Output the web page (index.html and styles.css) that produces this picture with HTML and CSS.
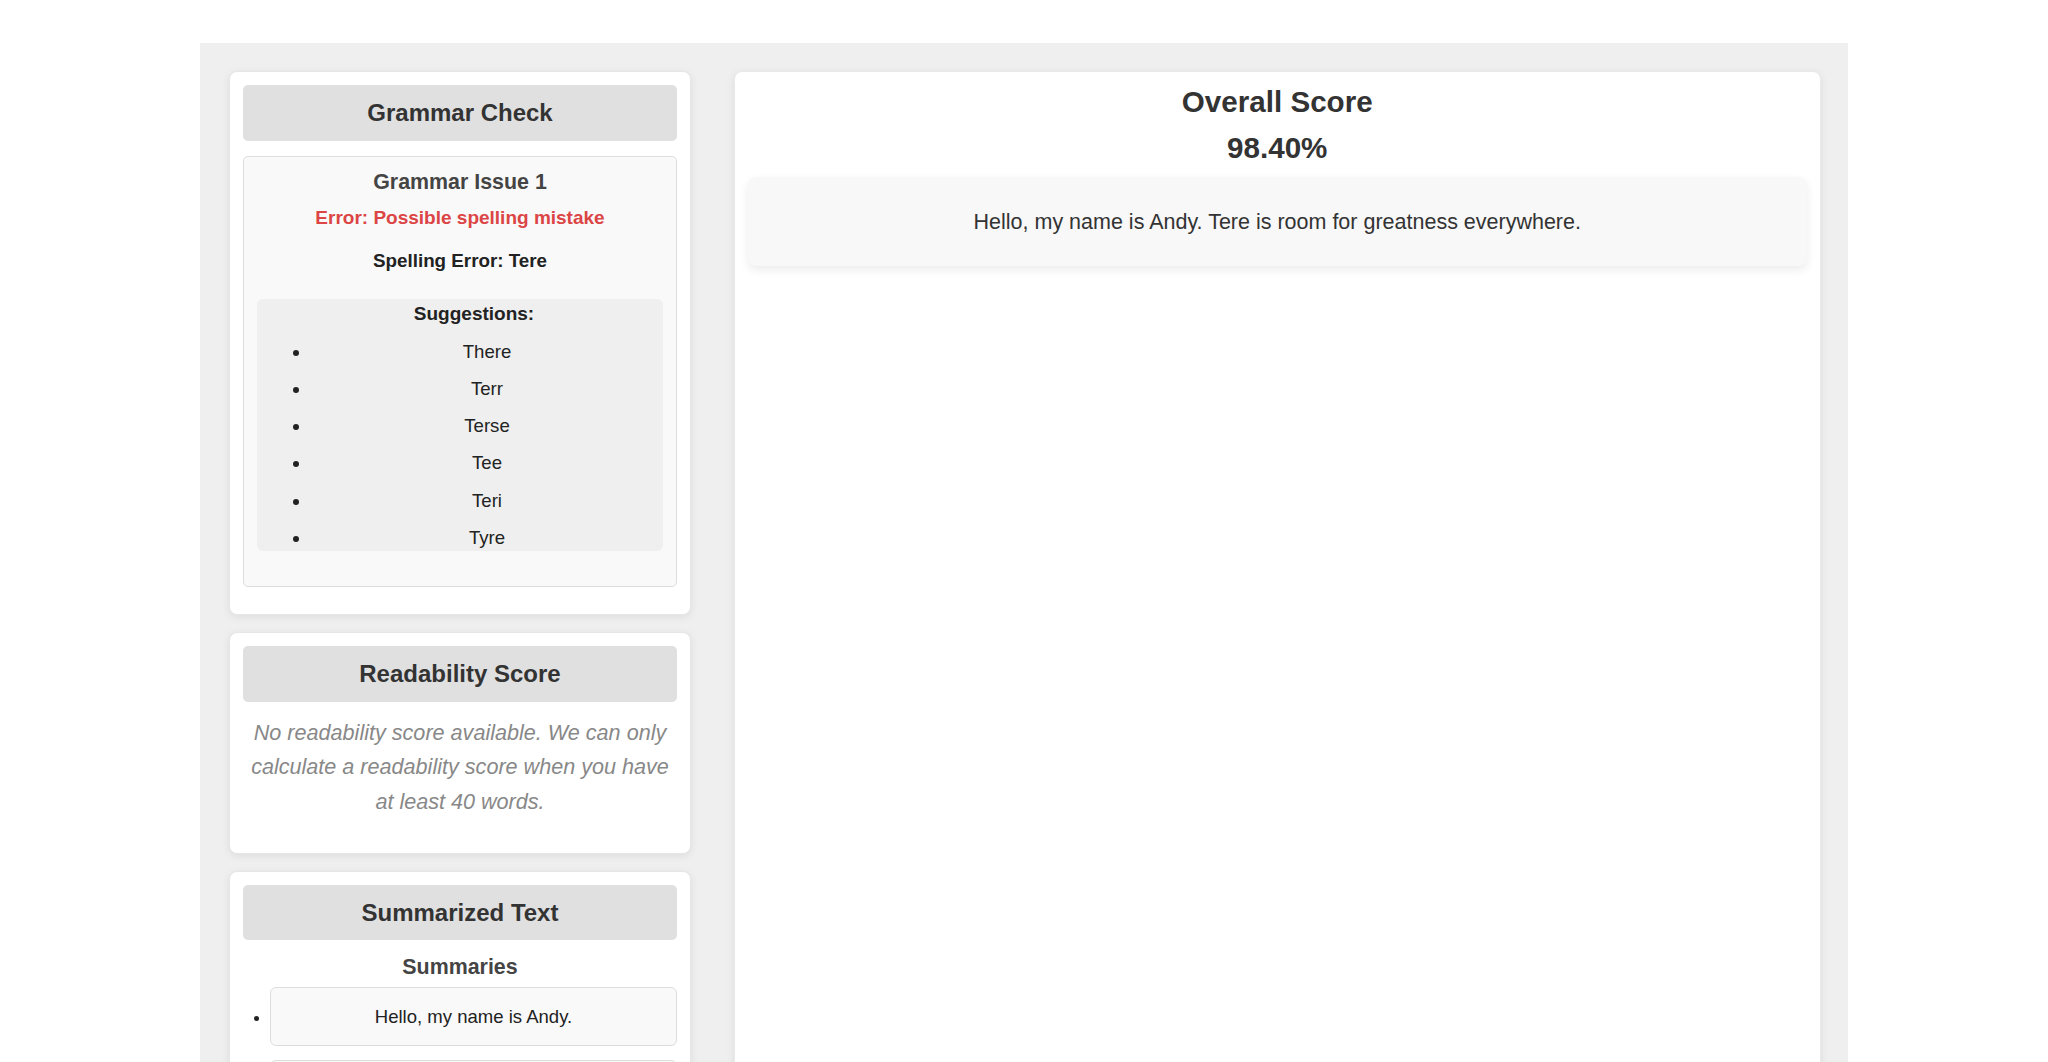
FILE: index.html
```html
<!DOCTYPE html>
<html lang="en">
<head>
<meta charset="utf-8">
<title>Writing Analysis</title>
<link rel="stylesheet" href="styles.css">
</head>
<body>
<div class="page">
  <div class="sidebar">
    <section class="card">
      <h2 class="card-title">Grammar Check</h2>
      <div class="issue">
        <h3 class="issue-title">Grammar Issue 1</h3>
        <p class="issue-error">Error: Possible spelling mistake</p>
        <p class="issue-word">Spelling Error: Tere</p>
        <div class="suggestions">
          <p class="suggestions-title">Suggestions:</p>
          <ul class="suggestions-list">
            <li>There</li>
            <li>Terr</li>
            <li>Terse</li>
            <li>Tee</li>
            <li>Teri</li>
            <li>Tyre</li>
          </ul>
        </div>
      </div>
    </section>

    <section class="card">
      <h2 class="card-title">Readability Score</h2>
      <p class="muted">No readability score available. We can only calculate a readability score when you have at least 40 words.</p>
    </section>

    <section class="card">
      <h2 class="card-title">Summarized Text</h2>
      <h3 class="summaries-title">Summaries</h3>
      <ul class="summaries-list">
        <li><div class="summary-box">Hello, my name is Andy.</div></li>
        <li><div class="summary-box">Tere is room for greatness everywhere.</div></li>
      </ul>
    </section>
  </div>

  <main class="result">
    <h1 class="result-title">Overall Score</h1>
    <p class="result-score">98.40%</p>
    <div class="result-text">Hello, my name is Andy. Tere is room for greatness everywhere.</div>
  </main>
</div>
</body>
</html>
```

FILE: styles.css
```css
* {
  box-sizing: border-box;
}

body {
  margin: 0;
  background: #ffffff;
  font-family: "Liberation Sans", Arial, Helvetica, sans-serif;
  color: #333333;
}

.page {
  width: 1648px;
  min-height: 1019px;
  margin: 43px auto 0;
  padding: 28px 27.5px 28px 29px;
  background: #efefef;
  display: grid;
  grid-template-columns: 462px 1fr;
  column-gap: 43px;
  align-items: stretch;
}

.sidebar {
  display: flex;
  flex-direction: column;
  gap: 16.5px;
}

.card {
  background: #ffffff;
  border: 1px solid #e6e6e6;
  border-radius: 8px;
  padding: 13px;
  box-shadow: 0 2px 8px rgba(0, 0, 0, 0.08);
}

.card-title {
  margin: 0;
  padding: 14px;
  background: #e0e0e0;
  border-radius: 5px;
  text-align: center;
  font-size: 24px;
  line-height: 27.6px;
  font-weight: 700;
  color: #333333;
}

/* Grammar issue */
.issue {
  margin: 15px 0 14px;
  padding: 13px;
  background: #f9f9f9;
  border: 1px solid #dddddd;
  border-radius: 5px;
  text-align: center;
}

.issue-title {
  margin: 0;
  font-size: 21.4px;
  line-height: 24.6px;
  font-weight: 700;
  color: #444444;
}

.issue-error {
  margin: 12.5px 0 0;
  font-size: 19px;
  line-height: 22px;
  font-weight: 700;
  color: #dc4545;
}

.issue-word {
  margin: 21.5px 0 0;
  font-size: 18.8px;
  line-height: 22px;
  font-weight: 700;
  color: #222222;
}

.suggestions {
  margin: 26.5px 0 22px;
  padding: 4px 0 3.5px 28px;
  background: #efefef;
  border-radius: 6px;
}

.suggestions-title {
  margin: 0;
  font-size: 19px;
  line-height: 22px;
  font-weight: 700;
  color: #222222;
}

.suggestions-list {
  margin: 0;
  padding-left: 26px;
  color: #222222;
}

.suggestions-list li {
  margin-top: 16px;
  font-size: 18.6px;
  line-height: 21.2px;
  text-align: center;
}

/* Readability */
.muted {
  margin: 14px 0 21px;
  font-size: 21.6px;
  line-height: 34.5px;
  font-style: italic;
  color: #888888;
  text-align: center;
}

/* Summaries */
.summaries-title {
  margin: 14.5px 0 0;
  font-size: 21.4px;
  line-height: 24.6px;
  font-weight: 700;
  color: #444444;
  text-align: center;
}

.summaries-list {
  margin: 8px 0 0;
  padding-left: 27px;
  color: #222222;
}

.summaries-list li + li {
  margin-top: 14px;
}

.summary-box {
  padding: 18px 10px;
  background: #f9f9f9;
  border: 1px solid #dddddd;
  border-radius: 6px;
  font-size: 18.55px;
  line-height: 21.3px;
  text-align: center;
}

/* Result panel */
.result {
  background: #ffffff;
  border: 1px solid #e9e9e9;
  border-radius: 8px;
  padding: 13px;
  box-shadow: 0 2px 8px rgba(0, 0, 0, 0.08);
  text-align: center;
}

.result-title {
  margin: 0;
  font-size: 29.6px;
  line-height: 34px;
  font-weight: 700;
  color: #333333;
}

.result-score {
  margin: 11.6px 0 0;
  font-size: 29.6px;
  line-height: 34px;
  font-weight: 700;
  color: #333333;
}

.result-text {
  margin-top: 12px;
  padding: 33px 20px 31px;
  background: #f8f8f8;
  border-radius: 8px;
  box-shadow: 0 4px 10px rgba(0, 0, 0, 0.08);
  font-size: 21.5px;
  line-height: 25px;
  color: #333333;
}
```
